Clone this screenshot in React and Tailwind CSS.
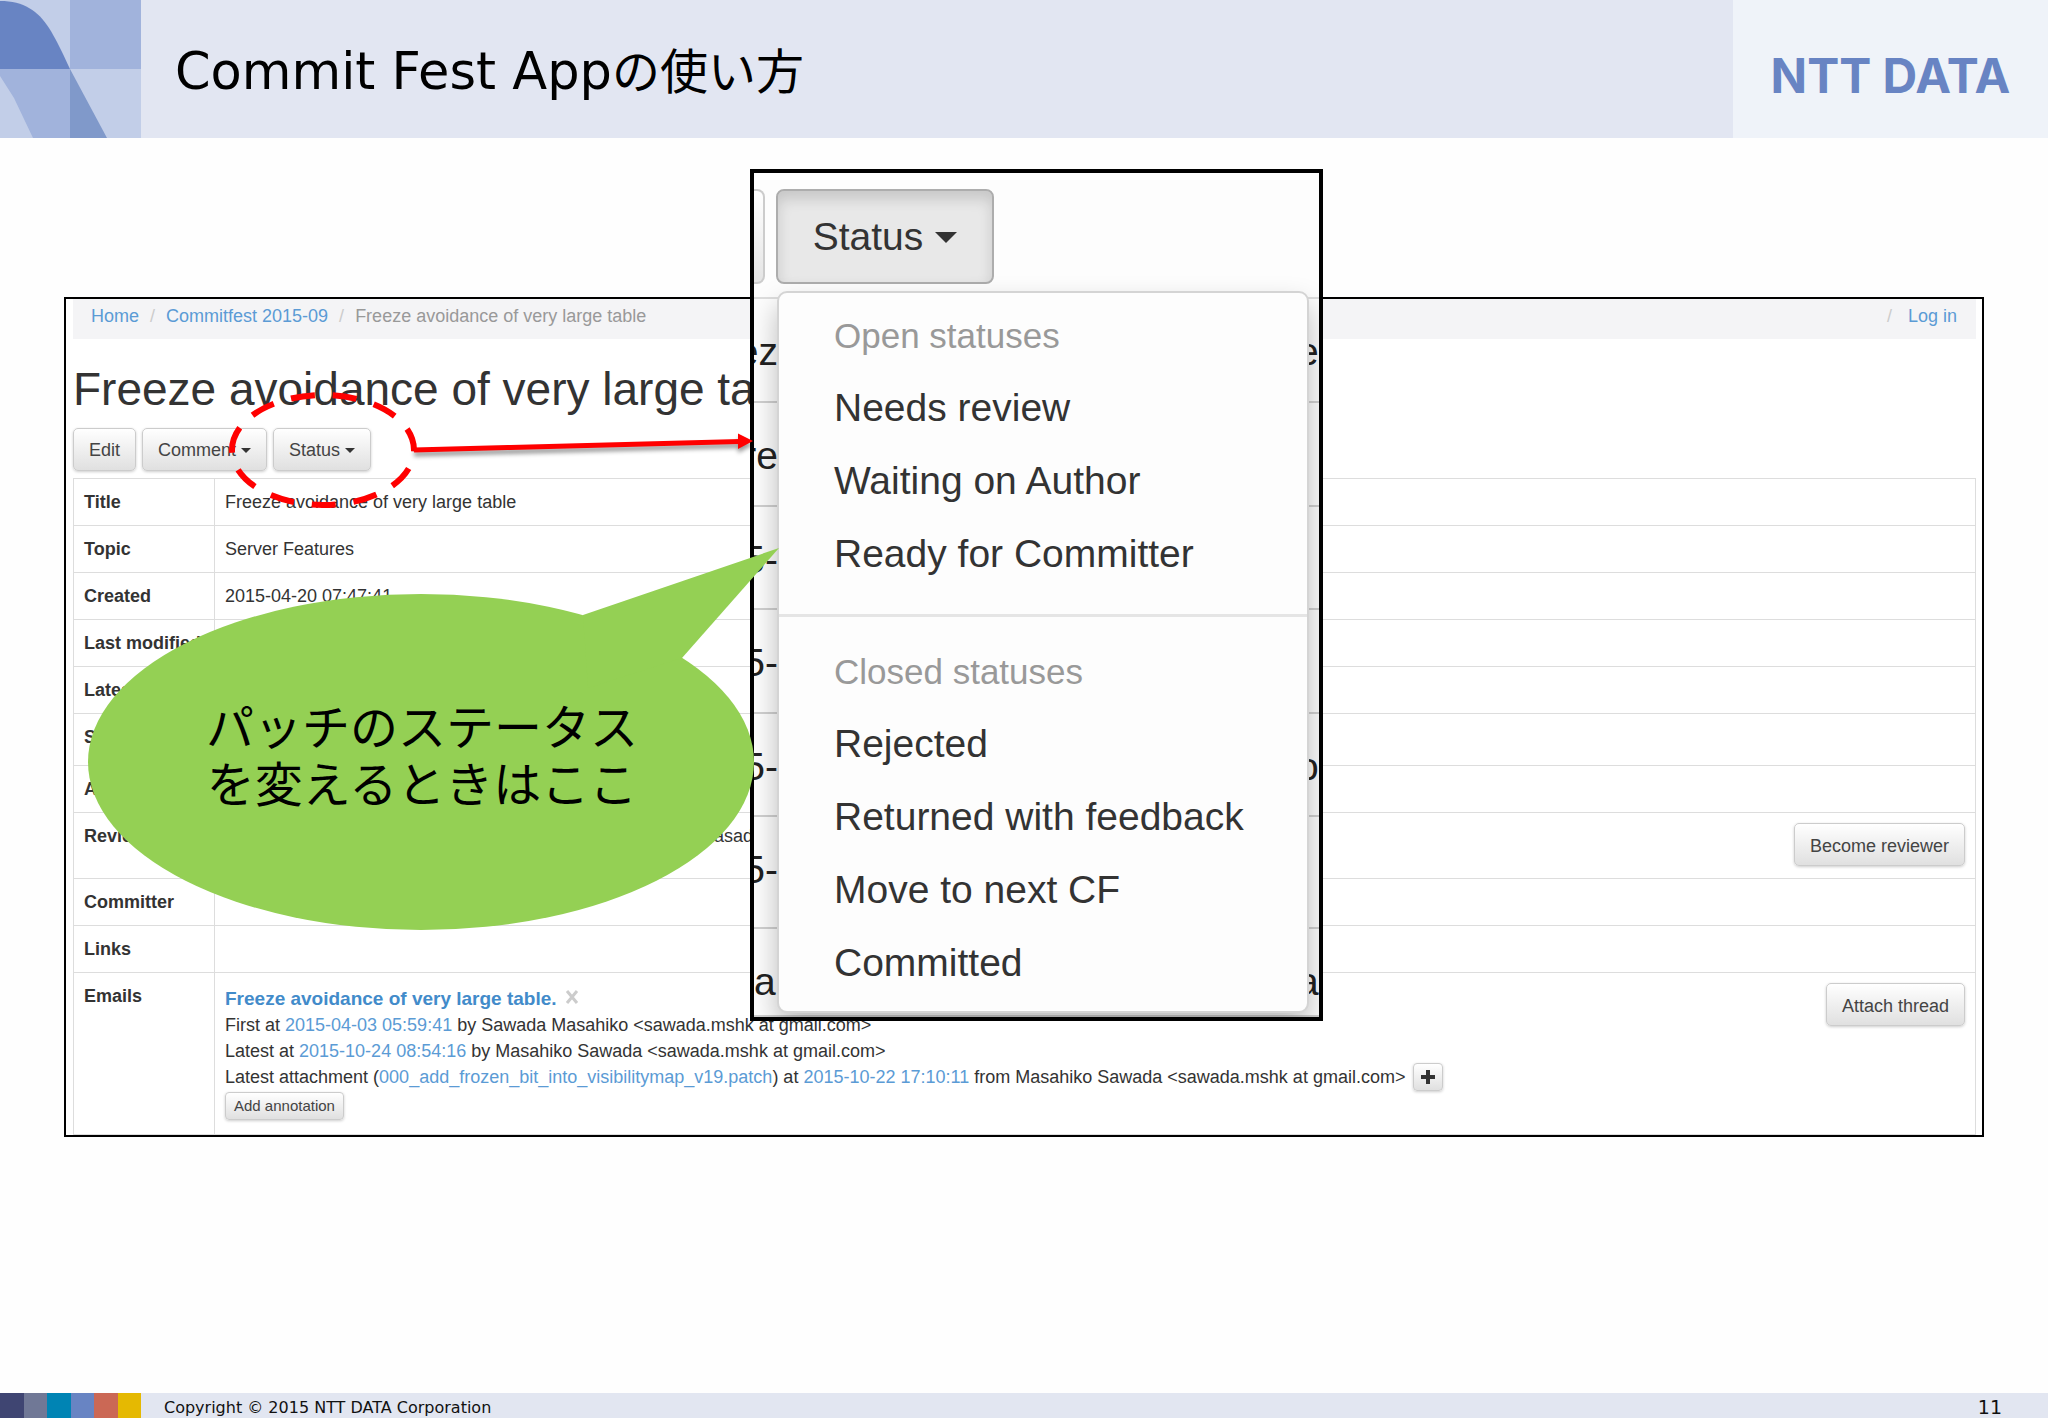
import React from "react";

const buttonBase =
  "inline-flex items-center justify-center border border-[#ccc] bg-linear-to-b from-white to-[#e0e0e0] text-[#444] shadow-[0_1px_3px_rgba(0,0,0,0.2)]";

function Caret() {
  return (
    <svg viewBox="0 0 10 5" className="ml-[5px] h-[5px] w-[10px]" aria-hidden="true">
      <path d="M0 0H10L5 5Z" fill="#333" />
    </svg>
  );
}

function Button({ children, caret }) {
  return (
    <button type="button" className={`${buttonBase} h-[43px] rounded-[5px] px-[15px] pt-[2px] text-[18px]`}>
      {children}
      {caret && <Caret />}
    </button>
  );
}

function Link({ children }) {
  return (
    <a href="#" className="text-[#5b9bd5]">
      {children}
    </a>
  );
}

function CornerArt() {
  return (
    <svg viewBox="0 0 141 138" className="h-[138px] w-[141px] shrink-0" aria-hidden="true">
      <rect width="141" height="138" fill="#c2cee8" />
      <rect x="70" width="71" height="69" fill="#a1b3dc" />
      <path d="M0 69H70V138H33L14 98L0 76Z" fill="#a1b3dc" />
      <path d="M0 1C24 1 38 11 49 28C56 39 63 54 70 69H0Z" fill="#6884c3" />
      <path d="M70 69L107 138H70Z" fill="#8099ca" />
    </svg>
  );
}

function Header() {
  return (
    <header className="flex h-[138px] bg-[#e2e6f2]">
      <CornerArt />
      <h1 className="flex flex-1 items-center pt-[6px] pl-[34px] font-['DejaVu_Sans','Noto_Sans_CJK_JP',sans-serif] text-[51px] text-black">
        <span>
          Commit Fest App<span className="text-[48px]">の使い方</span>
        </span>
      </h1>
      <div className="flex w-[315px] items-center justify-center bg-[#eff3f9] pt-[14px] font-['Inter',sans-serif] text-[48px] font-bold whitespace-nowrap text-[#6884c3]">
        NTT DATA
      </div>
    </header>
  );
}

function Breadcrumb() {
  return (
    <nav className="flex items-center bg-[#f4f4f6] pt-1 pr-[19px] pb-[10px] pl-[18px] leading-[26px]">
      <Link>Home</Link>
      <span className="px-[11px] text-[#ccc]">/</span>
      <Link>Commitfest 2015-09</Link>
      <span className="px-[11px] text-[#ccc]">/</span>
      <span className="text-[#999]">Freeze avoidance of very large table</span>
      <span className="mr-4 ml-auto text-[#ccc]">/</span>
      <Link>Log in</Link>
    </nav>
  );
}

function Row({ label, height, children }) {
  return (
    <tr className={height || "h-[47px]"}>
      <th scope="row" className="w-[141px] border border-[#ddd] px-[10px] pt-[10px] text-left align-top leading-[26px] font-bold whitespace-nowrap">
        {label}
      </th>
      <td className="border border-[#ddd] px-[10px] pt-[10px] align-top leading-[26px]">{children}</td>
    </tr>
  );
}

function Emails() {
  return (
    <div className="flex items-start justify-between">
      <div className="pt-[3px]">
        <div className="flex items-center text-[19px] font-bold">
          <a href="#" className="text-[#428bca]">
            Freeze avoidance of very large table.
          </a>
          <button type="button" aria-label="Remove thread" className="ml-2 pb-1">
            <svg viewBox="0 0 14 14" className="h-[14px] w-[14px]">
              <path d="M2 1L12 13M12 1L2 13" stroke="#ccc" strokeWidth="3" />
            </svg>
          </button>
        </div>
        <div>
          First at <Link>2015-04-03 05:59:41</Link> by Sawada Masahiko &lt;sawada.mshk at gmail.com&gt;
        </div>
        <div>
          Latest at <Link>2015-10-24 08:54:16</Link> by Masahiko Sawada &lt;sawada.mshk at gmail.com&gt;
        </div>
        <div className="flex h-[26px] items-center">
          <span>
            Latest attachment (<Link>000_add_frozen_bit_into_visibilitymap_v19.patch</Link>) at{" "}
            <Link>2015-10-22 17:10:11</Link> from Masahiko Sawada &lt;sawada.mshk at gmail.com&gt;
          </span>
          <button type="button" aria-label="Expand" className={`${buttonBase} ml-2 h-[28px] w-[30px] rounded-[4px]`}>
            <svg viewBox="0 0 14 14" className="h-[14px] w-[14px]">
              <path d="M7 0V14M0 7H14" stroke="#333" strokeWidth="4" />
            </svg>
          </button>
        </div>
        <button type="button" className={`${buttonBase} mt-[2px] h-[28px] rounded-[4px] px-2 text-[15px]`}>
          Add annotation
        </button>
      </div>
      <Button>Attach thread</Button>
    </div>
  );
}

function PatchPage() {
  return (
    <section className="overflow-hidden border-2 border-black bg-white px-[7px] pr-[6px] text-[18px] text-[#333]">
      <Breadcrumb />
      <h2 className="mt-[25px] mb-[13px] text-[46px] leading-[51px]">Freeze avoidance of very large table</h2>
      <div className="mb-[7px] flex gap-[6px]">
        <Button>Edit</Button>
        <Button caret>Comment</Button>
        <Button caret>Status</Button>
      </div>
      <table className="w-full border-collapse">
        <tbody>
          <Row label="Title">Freeze avoidance of very large table</Row>
          <Row label="Topic">Server Features</Row>
          <Row label="Created">2015-04-20 07:47:41</Row>
          <Row label="Last modified" />
          <Row label="Latest email" />
          <Row label="Status" height="h-[52px]" />
          <Row label="Authors" />
          <Row label="Reviewers" height="h-[66px]">
            <div className="flex items-start justify-between pl-[489px]">
              <span>asada</span>
              <Button>Become reviewer</Button>
            </div>
          </Row>
          <Row label="Committer" />
          <Row label="Links" />
          <Row label="Emails" height="h-[162px]">
            <Emails />
          </Row>
        </tbody>
      </table>
    </section>
  );
}

const backdropRows = [
  { left: "ez", right: "e", height: "h-[104px]" },
  { left: "re", right: "", height: "h-[104px]" },
  { left: "5-", right: "", height: "h-[103px]" },
  { left: "5-", right: "", height: "h-[104px]" },
  { left: "5-", right: "o", height: "h-[103px]" },
  { left: "5-", right: "", height: "h-[112px]" },
  { left: "ah", right: "a", height: "h-[88px]" },
];

function MenuItem({ children }) {
  return (
    <li>
      <button type="button" className="block h-[73px] w-full pl-[55px] text-left text-[39px] leading-[73px] text-[#333]">
        {children}
      </button>
    </li>
  );
}

function MenuHeading({ children }) {
  return <li className="h-[70px] pl-[55px] text-[35px] leading-[70px] text-[#999]">{children}</li>;
}

function StatusPopup() {
  return (
    <div className="absolute top-[-128px] left-[686px] h-[852px] w-[573px] overflow-hidden border-4 border-black bg-[#fdfdfd] text-[39px] text-[#333]">
      <div className="flex h-[126px] items-start gap-[11px] border-b-2 border-[#ddd] pt-4">
        <div className="h-[95px] w-[11px] rounded-r-[8px] border-2 border-l-0 border-[#ccc] bg-linear-to-b from-white to-[#e4e4e4]" />
        <button
          type="button"
          className="flex h-[95px] w-[218px] items-center justify-center gap-3 rounded-[8px] border-2 border-[#adadad] bg-[#e8e8e8] pt-[2px] shadow-[inset_0_8px_14px_rgba(0,0,0,0.14)]"
        >
          Status
          <svg viewBox="0 0 22 11" className="h-[11px] w-[22px]" aria-hidden="true">
            <path d="M0 0H22L11 11Z" fill="#333" />
          </svg>
        </button>
      </div>
      {backdropRows.map((row, i) => (
        <div
          key={i}
          className={`${row.height} flex justify-between border-b-2 border-[#d0d0d0] pt-[31px] leading-[44px] text-[#222]`}
        >
          <span className={row.left === "ah" ? "flex w-[24px] justify-start" : "flex w-[24px] justify-end"}>
            {row.left}
          </span>
          <span className="flex w-[22px] justify-start">{row.right}</span>
        </div>
      ))}
      <ul className="absolute top-[118px] left-[23px] w-[532px] rounded-[10px] border-2 border-[#d4d4d4] bg-[#fdfdfd] pt-2 pb-3 shadow-[0_14px_28px_rgba(0,0,0,0.26)]">
        <MenuHeading>Open statuses</MenuHeading>
        <MenuItem>Needs review</MenuItem>
        <MenuItem>Waiting on Author</MenuItem>
        <MenuItem>Ready for Committer</MenuItem>
        <li className="mt-6 mb-5 h-[3px] bg-[#e5e5e5]" role="separator" />
        <MenuHeading>Closed statuses</MenuHeading>
        <MenuItem>Rejected</MenuItem>
        <MenuItem>Returned with feedback</MenuItem>
        <MenuItem>Move to next CF</MenuItem>
        <MenuItem>Committed</MenuItem>
      </ul>
    </div>
  );
}

function Pointer() {
  return (
    <svg viewBox="0 0 532 126" className="pointer-events-none absolute top-[90px] left-[160px] h-[126px] w-[532px]" aria-hidden="true">
      <path
        d="M8 63A91 55 0 1 1 190 63A91 55 0 1 1 8 63"
        fill="none"
        stroke="#f00"
        strokeWidth="6"
        strokeDasharray="24 18"
      />
      <g className="drop-shadow-[0_4px_2px_rgba(0,0,0,0.4)]">
        <path d="M190 63L516 54.500" stroke="#f00" strokeWidth="5" />
        <path d="M514 46.500L529 54L514 62Z" fill="#f00" />
      </g>
    </svg>
  );
}

function Callout() {
  return (
    <div className="absolute top-[251px] left-[24px] h-[382px] w-[691px]">
      <svg viewBox="0 0 691 382" className="absolute inset-0 h-full w-full" aria-hidden="true">
        <ellipse cx="333" cy="214" rx="333" ry="168" fill="#94d054" />
        <path d="M495 67L691 0L594 110L500 140Z" fill="#94d054" />
      </svg>
      <p className="relative flex h-full w-[668px] items-center justify-center pt-[28px] text-center font-['Noto_Sans_CJK_JP',sans-serif] text-[48px] leading-[57px] text-black">
        パッチのステータス
        <br />
        を変えるときはここ
      </p>
    </div>
  );
}

function Footer() {
  return (
    <footer className="flex h-[25px] items-center bg-[#e2e6f1] pr-[46px] font-['DejaVu_Sans',sans-serif] text-[#111]">
      <div className="grid h-full w-[141px] grid-cols-6">
        <div className="bg-[#3f4572]" />
        <div className="bg-[#707896]" />
        <div className="bg-[#0084b4]" />
        <div className="bg-[#6884c3]" />
        <div className="bg-[#cb6855]" />
        <div className="bg-[#e5b902]" />
      </div>
      <span className="pt-1 pl-[23px] text-[16px]">Copyright © 2015 NTT DATA Corporation</span>
      <span className="ml-auto pt-1 text-[19px]">11</span>
    </footer>
  );
}

export default function App() {
  return (
    <div className="flex min-h-screen flex-col bg-[#fefefe] font-['Liberation_Sans',Arial,sans-serif]">
      <Header />
      <main className="flex-1 px-16 pt-[159px]">
        <div className="relative">
          <PatchPage />
          <StatusPopup />
          <Pointer />
          <Callout />
        </div>
      </main>
      <Footer />
    </div>
  );
}
